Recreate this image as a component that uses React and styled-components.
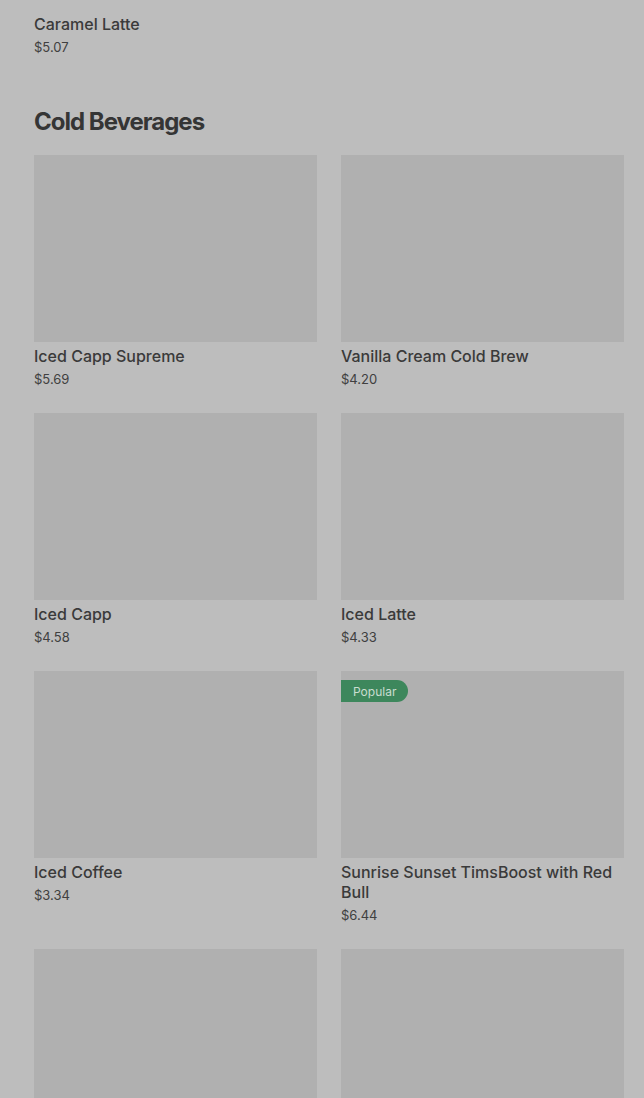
import styled, { createGlobalStyle } from 'styled-components';

const GlobalStyle = createGlobalStyle`
  html, body {
    margin: 0;
    padding: 0;
    background: #bdbdbd;
    overflow: hidden;
  }
`;

const coldItems = [
  { id: 1, name: 'Iced Capp Supreme', price: '$5.69' },
  { id: 2, name: 'Vanilla Cream Cold Brew', price: '$4.20' },
  { id: 3, name: 'Iced Capp', price: '$4.58' },
  { id: 4, name: 'Iced Latte', price: '$4.33' },
  { id: 5, name: 'Iced Coffee', price: '$3.34' },
  { id: 6, name: 'Sunrise Sunset TimsBoost with Red Bull', price: '$6.44', popular: true },
  { id: 7, name: '', price: '' },
  { id: 8, name: '', price: '' },
];

const ItemCard = ({ item, showImage = true }) => (
  <Card>
    {showImage && (
      <ItemImage>{item.popular && <PopularBadge>Popular</PopularBadge>}</ItemImage>
    )}
    {item.name && <ItemName>{item.name}</ItemName>}
    {item.price && <ItemPrice>{item.price}</ItemPrice>}
  </Card>
);

const App = () => (
  <>
    <GlobalStyle />
    <MenuPage>
      <Grid>
        <ItemCard item={{ name: 'Caramel Latte', price: '$5.07' }} showImage={false} />
      </Grid>
      <SectionHead>Cold Beverages</SectionHead>
      <Grid>
        {coldItems.map((eachObj) => (
          <ItemCard key={eachObj.id} item={eachObj} />
        ))}
      </Grid>
    </MenuPage>
  </>
);

export default App;

const MenuPage = styled.div`
  height: 1098px;
  overflow: hidden;
  background-color: #bdbdbd;
  padding: 14px 20px 0 34px;
  box-sizing: border-box;
  font-family: 'Inter', 'Roboto', sans-serif;
`;

const Grid = styled.ul`
  list-style-type: none;
  margin: 0;
  padding: 0;
  display: grid;
  grid-template-columns: 283px 283px;
  column-gap: 24px;
  row-gap: 24px;
`;

const Card = styled.li`
  display: flex;
  flex-direction: column;
`;

const ItemImage = styled.div`
  position: relative;
  height: 187px;
  background-color: #b0b0b0;
  margin-bottom: 4px;
`;

const PopularBadge = styled.span`
  position: absolute;
  top: 9px;
  left: 0;
  height: 22px;
  padding: 0 12px;
  display: flex;
  align-items: center;
  background-color: #3d875c;
  color: #c9ddd0;
  font-size: 12px;
  border-radius: 0 12px 12px 0;
`;

const ItemName = styled.h3`
  margin: 0;
  font-size: 16px;
  line-height: 20px;
  font-weight: 500;
  color: #3a3a3a;
`;

const ItemPrice = styled.p`
  margin: 3px 0 0;
  font-size: 13px;
  line-height: 20px;
  color: #404040;
`;

const SectionHead = styled.h2`
  margin: 49px 0 17px;
  font-size: 24px;
  line-height: 32px;
  font-weight: 700;
  letter-spacing: -1px;
  color: #353535;
`;
